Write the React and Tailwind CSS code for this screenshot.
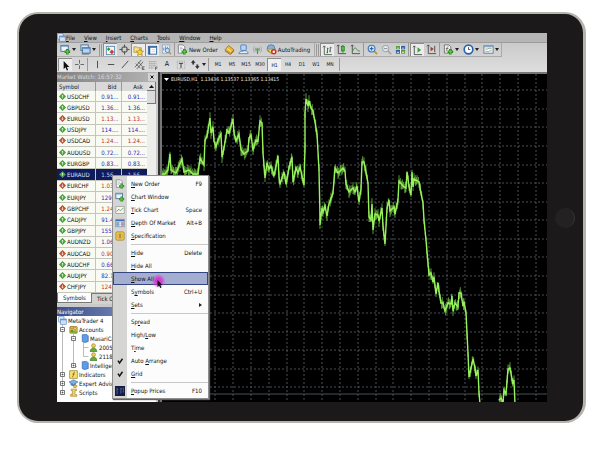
import React, { useState } from 'react';
import clsx from 'clsx';

const UP = '#3f9a2f';
const DOWN = '#b8472c';

const quotes = [
    ['USDCHF', '0.91...', true],
    ['GBPUSD', '1.36...', true],
    ['EURUSD', '1.13...', false],
    ['USDJPY', '114....', true],
    ['USDCAD', '1.24...', false],
    ['AUDUSD', '0.72...', true],
    ['EURGBP', '0.83...', true],
    ['EURAUD', '1.56...', true],
    ['EURCHF', '1.03...', false],
    ['EURJPY', '129....', true],
    ['GBPCHF', '1.24...', false],
    ['CADJPY', '91.4...', true],
    ['GBPJPY', '155....', true],
    ['AUDNZD', '1.06...', true],
    ['AUDCAD', '0.90...', false],
    ['AUDCHF', '0.66...', true],
    ['AUDJPY', '82.7...', true],
    ['CHFJPY', '124....', false],
];

// x,y pairs of the price line
const priceMain = [
    [161, 174], [164, 174], [167, 170], [169, 154], [170, 170], [175, 173], [178, 166], [181, 159], [183, 172], [188, 170], [192, 174], [197, 174],
    [199, 158], [203, 165], [204, 140], [206, 136], [209, 118], [210, 133], [212, 127], [213, 141], [215, 147], [217, 140], [220, 134], [221, 157], [223, 148],
    [226, 130], [228, 133], [232, 119], [233, 133], [235, 141], [238, 134], [240, 150], [243, 154], [247, 151], [248, 138], [250, 135], [252, 150], [255, 140],
    [257, 141], [259, 121], [261, 123], [262, 153], [264, 178], [266, 163], [268, 169], [270, 166], [273, 176], [277, 156], [278, 177], [279, 184], [283, 172],
    [285, 184], [288, 168], [291, 157], [292, 182], [295, 168], [297, 173], [299, 167], [303, 185], [304, 147], [304, 113], [305, 99], [307, 106], [308, 101],
    [310, 108], [312, 111], [314, 122], [316, 134], [318, 170], [319, 217], [319, 225], [321, 208], [322, 212], [324, 206], [326, 216], [328, 204], [332, 193],
    [334, 168], [337, 173], [342, 168], [344, 171], [345, 184], [348, 192], [352, 188], [354, 192], [356, 186], [358, 202], [360, 189], [361, 162], [363, 162],
    [365, 172], [367, 183], [368, 217], [370, 220], [371, 204], [372, 230], [374, 214], [377, 215], [378, 221], [381, 208], [382, 226], [384, 244], [386, 208],
    [388, 200], [389, 211], [393, 207], [394, 214], [397, 200], [398, 181], [402, 186], [405, 188], [406, 172], [408, 186], [410, 195], [411, 172], [412, 187],
    [413, 179], [418, 182], [420, 193], [422, 203], [423, 220], [425, 240], [427, 263], [428, 275], [430, 273], [432, 282], [433, 277], [435, 294], [437, 283],
    [438, 291], [440, 303], [442, 303], [444, 311], [447, 303], [450, 304], [451, 296], [452, 311], [454, 303], [457, 307], [458, 293], [460, 293], [462, 306],
    [463, 302], [465, 313], [466, 333], [467, 353], [468, 377], [472, 359], [474, 368], [475, 376], [477, 370], [478, 393], [479, 404],
];
const priceTail = [[498, 400], [500, 398], [502, 403], [503, 390], [505, 394], [507, 369], [509, 368], [511, 379], [512, 384], [513, 380], [514, 404]];

// turns the line into a row of high/low bars
const toBars = (points) => {
    let d = '';
    let n = 0;
    for (let i = 1; i < points.length; i++) {
        const [x0, y0] = points[i - 1];
        const [x1, y1] = points[i];
        const steps = Math.max(1, Math.round((x1 - x0) * 1.5));
        for (let s = 0; s < steps; s++) {
            const x = x0 + ((x1 - x0) * s) / steps;
            const y = y0 + ((y1 - y0) * s) / steps;
            const up = 1 + ((n * 7) % 5) * 1.2;
            const down = 1 + ((n * 11) % 6);
            d += `M${x.toFixed(1)} ${(y - up).toFixed(1)}V${(y + down).toFixed(1)}`;
            n++;
        }
    }
    return d;
};
const toLine = (points) => 'M' + points.map((p) => p.join(' ')).join('L');

const Svg = ({ children, className = 'size-3' }) => (
    <svg className={clsx('shrink-0', className)} viewBox="0 0 12 12" fill="none" aria-hidden="true">{children}</svg>
);

const Plus = () => <path d="M8 5.500v6M5 8.500h6" stroke="#278a1d" strokeWidth="2.800" />;
const PlusLight = () => <path d="M8 6.500v4M6 8.500h4" stroke="#67c943" strokeWidth="1.200" />;

const icons = {
    newChart: <><rect x="1" y="1.500" width="8" height="6.500" fill="#eef4fa" stroke="#44709d" /><path d="M1 2.500h8" stroke="#6f9ccc" /><Plus /><PlusLight /></>,
    indicators: <><path d="M1.500 1h5l2 2v7h-7z" fill="#f4f4f0" stroke="#666" strokeWidth=".9" /><path d="M6 3C4.500 2.500 4.500 4 4.300 5.500S4 8 3 8M3 5h3" stroke="#555" strokeWidth=".8" /><Plus /><PlusLight /></>,
    profiles: <><rect x="1" y="1" width="8" height="6" fill="#dceafa" stroke="#44709d" /><rect x="2.500" y="4" width="8.500" height="6" fill="#b9d3f0" stroke="#44709d" /><path d="M3 5h8" stroke="#5d8fc6" /><path d="M2 11h8" stroke="#555" strokeWidth=".8" /></>,
    market: <><rect x="1.500" y="1.500" width="9" height="9" fill="#f3f7fc" stroke="#6389b3" /><path d="M4 2.500 6 4.500 4 6.500 2 4.500z" fill="#2d9c33" /><path d="M7.500 5 10 7.500 7.500 10 5 7.500z" fill="#d33b25" /></>,
    target: <><circle cx="6" cy="6" r="3" stroke="#555" strokeWidth="1.100" /><path d="M6 .5v3.500M6 8v3.500M.5 6H4M8 6h3.500" stroke="#555" strokeWidth="1.200" /></>,
    star: <><path d="M1 2h3l1 1h4v5H1z" fill="#f5df88" stroke="#a58a2c" strokeWidth=".8" /><path d="m7.500 4 1.200 2.500 2.800.3-2 1.900.6 2.800-2.600-1.400L5 11.500l.6-2.800-2-1.900 2.800-.3z" fill="#f8d640" stroke="#a67c10" strokeWidth=".7" /></>,
    panel: <><rect x="1.500" y="1.500" width="9" height="8.500" fill="#fff" stroke="#31619c" /><path d="M1.500 2.300h9M2.800 2v8" stroke="#31619c" strokeWidth="1.500" /><path d="M5 5h4M5 7h4" stroke="#b7c7da" strokeWidth=".7" /></>,
    tester: <><rect x="1.500" y="1" width="8" height="9" fill="#e4edf7" stroke="#8ba3bd" strokeWidth=".8" /><path d="M3 7V4M5 6V2.500M7 5V3" stroke="#6586ac" /><circle cx="7" cy="7" r="2.300" fill="#cae2f5" stroke="#4c7dad" /><path d="m8.500 8.700 2.500 2.500" stroke="#b99636" strokeWidth="1.300" /></>,
    order: <><path d="M1.500 1h5l2 2v7h-7z" fill="#fff" stroke="#777" strokeWidth=".9" /><path d="M3 3.500h3M3 5h4M3 6.500h2" stroke="#8b9db2" strokeWidth=".7" /><Plus /><PlusLight /></>,
    book: <><path d="M1 6.500 5 1.500 11 6.500 7 10.500z" fill="#e9b93c" stroke="#94691b" strokeWidth=".8" /><path d="m1 7.500 6 4 4-4" stroke="#94691b" strokeWidth=".9" /><path d="m3.500 5 4 3" stroke="#fff1b0" /></>,
    person: <><rect x="3" y="1" width="6" height="6" rx="1" fill="#b5d5f5" stroke="#4b7dbd" /><path d="M1 10.500c0-2 2-3 4-2.500 2-1.500 6-.5 6 2.500z" fill="#dfecfa" stroke="#4b7dbd" strokeWidth=".9" /></>,
    signal: <><path d="M3 2.500a5 5 0 0 0 0 7M9 2.500a5 5 0 0 1 0 7" stroke="#9aa6ad" /><path d="M4.500 4a3 3 0 0 0 0 4M7.500 4a3 3 0 0 1 0 4" stroke="#719b75" /><circle cx="6" cy="6" r="1.300" fill="#43a13c" /><path d="M6 7v4" stroke="#43a13c" strokeWidth="1.300" /></>,
    auto: <><circle cx="5.500" cy="5" r="4.200" fill="#86b3de" stroke="#44709d" strokeWidth=".8" /><path d="M1 5.500h9L6 11z" fill="#efc94e" stroke="#a37c1e" strokeWidth=".6" /><circle cx="8.500" cy="8.500" r="3" fill="#d22f1c" /><rect x="7.300" y="7.300" width="2.400" height="2.400" fill="#fff" /></>,
    bars: <path d="M2.500 1v9.500H11M1 2.500 2.500 1 4 2.500M6 3v6M4.800 8H6M6 4h1.200M9 2v6M7.800 6.500H9M9 3h1.500" stroke="#3f5141" strokeWidth=".9" />,
    candles: <><path d="M2.500 1v9.500H11M1 2.500 2.500 1 4 2.500" stroke="#4b4b4b" /><path d="M7.500 1v8.500" stroke="#1d7d1d" /><rect x="6" y="2.500" width="3" height="5" fill="#52c243" stroke="#1d7d1d" strokeWidth=".8" /></>,
    line: <><path d="M2.500 1v9.500H11M1 2.500 2.500 1 4 2.500" stroke="#4b4b4b" /><path d="M3 7.500c2-4 3-4 4.500-1.500S10 7 11 8" stroke="#41874b" /></>,
    zoomIn: <><path d="m7 7 4 4" stroke="#b99636" strokeWidth="2" /><circle cx="5" cy="5" r="3.700" fill="#d7ebfb" stroke="#3f78b8" strokeWidth="1.200" /><path d="M3 5h4M5 3v4" stroke="#2b63a4" strokeWidth="1.200" /></>,
    zoomOut: <><path d="m7 7 4 4" stroke="#a9a79f" strokeWidth="1.800" /><circle cx="5" cy="5" r="3.500" fill="#e4e8ea" stroke="#8f9ba5" /><path d="M3 5h4" stroke="#7f8b97" /></>,
    tile: <><rect x="1" y="1.500" width="10" height="9" fill="#fff" /><path d="M1 2h4.500v4H1zM6.500 6.500H11v4H6.500z" fill="#5d9b3c" /><path d="M6.500 2H11v4H6.500zM1 6.500h4.500v4H1z" fill="#2f5fa5" /><path d="M2 4h2.500v1H2zM7.500 4H10v1H7.500zM2 8.500h2.500v1H2zM7.500 8.500H10v1H7.500z" fill="#eef4ee" /></>,
    scroll: <><path d="M2.500 1v9.500H11M1 2.500 2.500 1 4 2.500" stroke="#4b4b4b" /><path d="M6 2.500v6l4-3z" fill="#3fa038" /></>,
    shift: <><path d="M2.500 1v9.500H11M1 2.500 2.500 1 4 2.500M9.500 2v7" stroke="#4b4b4b" /><path d="M5 3v5l3.500-2.500z" fill="#a33b32" /></>,
    clock: <><circle cx="6" cy="6" r="4.700" fill="#fff" stroke="#2d63ae" strokeWidth="1.800" /><path d="M6 3.500V6h2" stroke="#333" strokeWidth=".9" /></>,
    template: <><rect x="1" y="2" width="10" height="8" fill="#fff" stroke="#55789f" /><path d="M1 3h10" stroke="#7ea1c9" strokeWidth="1.300" /><path d="M2.500 5.500h3l1-1 3 1M2.500 8h2l1 .8L7 7.500h2.500" stroke="#6d8f75" strokeWidth=".8" /></>,
    pointer: <path d="M4 1v9l2-2 1.500 3.500 1.400-.6L7.500 7.500h2.700z" fill="#111" />,
    cross: <path d="M6 1v4M6 7v4M1 6h4M7 6h4" stroke="#555" strokeWidth=".9" />,
    vline: <path d="M6 2v8" stroke="#444" />,
    hline: <path d="M2 6h7" stroke="#444" />,
    trend: <path d="m2 10 7-8" stroke="#444" />,
    channel: <><path d="m1 9 7-8M3 11l7-8M2 5l5 5M4.500 3l4 4.500" stroke="#444" strokeWidth=".8" /><path d="M9 8.500h2.500M9 10h2M9 11.500h2.500M9 8.500v3" stroke="#333" strokeWidth=".7" /></>,
    fibo: <><path d="M1 2h9M1 4.500h9M1 7h9M1 9.500h6" stroke="#777" strokeWidth=".8" strokeDasharray="1.500 .6" /><path d="M9 12V8.500h2.500M9 10h2" stroke="#333" strokeWidth=".7" /></>,
    label: <><rect x="1.500" y="1.500" width="9" height="9" stroke="#888" strokeWidth=".7" strokeDasharray="1 1" /><path d="M3.500 4h5M6 4v5.500" stroke="#333" strokeWidth="1.100" /></>,
    arrows: <><path d="M3.500 1 6 4H4.500v2h-2V4H1z" fill="#333" /><path d="M8 11 5.500 8H7V6h2v2h1.500z" fill="#333" /></>,
    tick: <><rect x="1" y="2" width="10" height="8" fill="#f3f7f0" stroke="#8a9a8a" strokeWidth=".8" /><path d="m2 8 2.500-3 2 2L10 3.500" stroke="#48784c" strokeWidth=".8" /></>,
    depth: <><rect x="1" y="1.500" width="10" height="9" fill="#fff" stroke="#5b7ba5" strokeWidth=".8" /><path d="M1 3h10" stroke="#3d6eb3" strokeWidth="2" /><path d="M1.500 4.500h3v5.500h-3z" fill="#8db1df" /><path d="M8 4.500h2.500v5.500H8z" fill="#e19286" /><path d="M1 6h10M1 8h10M4.700 4v6M7.800 4v6" stroke="#7290a8" strokeWidth=".6" /></>,
    spec: <><rect x="1" y="1" width="10" height="10" rx="1.500" fill="#f0c64c" stroke="#9c7a21" strokeWidth=".8" /><circle cx="6" cy="6" r="2.700" fill="#f9e18a" stroke="#a98020" strokeWidth=".7" /><path d="M6 4v4M5 5h2M5 7h2" stroke="#6d5208" strokeWidth=".8" /></>,
    check: <path d="m3.500 5.500 2 2.800 3.500-5" stroke="#111" strokeWidth="1.700" />,
    popup: <><rect x="0" y="0" width="12" height="12" fill="#141c44" /><path d="M2.500 2v8M2.500 4H4M6.500 3h2M7 3v6M10 2v6" stroke="#5a76b4" strokeWidth=".9" /></>,
    terminal: <><rect x="1" y="1" width="7" height="7" fill="#e8f1fb" stroke="#4c7dbd" strokeWidth=".8" /><rect x="3.500" y="4" width="7.500" height="7" fill="#cfe1f6" stroke="#4c7dbd" strokeWidth=".8" /><path d="M3.500 5h7.500" stroke="#4c7dbd" strokeWidth="1.200" /></>,
    accounts: <><rect x="1" y="2" width="10" height="9" rx="1" fill="#e7c34b" stroke="#8e6f1c" strokeWidth=".8" /><circle cx="4" cy="3.500" r="2" fill="#e7b65c" stroke="#7a561c" strokeWidth=".5" /><path d="M1.500 10c0-5 5-5 5 0z" fill="#4e9e3b" /><circle cx="8" cy="4.500" r="1.800" fill="#f2cf88" stroke="#7a561c" strokeWidth=".5" /><path d="M5.500 11c0-5 5.500-5 5.500 0z" fill="#79b23a" /></>,
    server: <path d="m3 1 6-.5 2 2V10l-5 1.500L3 10z" fill="#5f9de4" stroke="#255da6" strokeWidth=".8" />,
    user: <><circle cx="6" cy="3.500" r="2.600" fill="#f0cc52" stroke="#8e6f1c" strokeWidth=".7" /><path d="M1.500 11.500c0-6.500 9-6.500 9 0z" fill="#62ac36" stroke="#2e6f1c" strokeWidth=".7" /></>,
    func: <><rect x="1" y="1" width="10" height="10" fill="#f8e16c" stroke="#97791d" strokeWidth=".9" /><path d="M8 3C6.500 2.500 6.300 4 6 6s-.7 3.500-2 3M4.500 5.500h3" stroke="#5a4a10" strokeWidth=".9" /></>,
    expert: <><path d="M0 4 6 1l6 3-6 3.500z" fill="#7fb1e6" stroke="#31619c" strokeWidth=".7" /><path d="M2 5v3c2 2 5 2 7 0V5L6 7z" fill="#4e86c7" /><path d="M7 7.500 11 9l-2 3-3-1z" fill="#eec44c" stroke="#94691b" strokeWidth=".6" /></>,
    script: <><path d="M3 1.500h7v2H8V9h2.500v2H3V9h1.500V3.500H3z" fill="#f1d774" stroke="#97791d" strokeWidth=".8" /><path d="m1 9 3-2 1 3-3 1.500z" fill="#dca93a" /></>,
};

const Caret = () => (
    <svg className="mx-px h-[3px] w-[4px]" viewBox="0 0 4 3" aria-hidden="true"><path d="M0 0h4L2 3z" fill="#222" /></svg>
);

const ToolButton = ({ name, label, pressed, caret, text }) => (
    <button
        type="button"
        aria-label={label}
        aria-pressed={pressed ? true : undefined}
        className={clsx('flex h-[13px] items-center justify-center', text ? 'px-px' : caret ? 'w-5' : 'w-[14px]', pressed && 'border-l border-t border-[#8c8c8c] bg-[#ececec]')}
    >
        <Svg className={name === 'label' || name === 'fibo' ? 'size-[10px]' : 'size-[11px]'}>{icons[name]}</Svg>
        {text && <span className="ml-px leading-[9px]">{text}</span>}
        {caret && <Caret />}
    </button>
);

const Separator = () => <span className="mx-px h-[13px] w-px shrink-0 bg-[#999]" />;
const Grip = () => <span className="mx-px h-[12px] w-[3px] shrink-0 border-x border-[#999]" />;

// label with its access key underlined
const Hot = ({ text, at = 0 }) => (
    at === 0
        ? <span className="inline-block first-letter:underline">{text}</span>
        : <>{text.slice(0, at)}<span className="underline">{text[at]}</span>{text.slice(at + 1)}</>
);

const MenuBar = () => (
    <nav className="flex h-[9px] items-center gap-[9px] bg-[#b5b5b5] leading-[9px] text-[#111]">
        <Svg className="-mr-[9px] size-[9px]">{icons.terminal}</Svg>
        {['File', 'View', 'Insert', 'Charts', 'Tools', 'Window', 'Help'].map((item) => (
            <button key={item} type="button" className="leading-[9px]"><Hot text={item} /></button>
        ))}
    </nav>
);

const Toolbars = () => {
    const [frame, setFrame] = useState('H1');
    return (
        <div className="bg-linear-to-b from-[#cacaca] to-[#dedede] text-[#111]">
            <div className="flex h-[15px] items-center border-t border-[#9d9d9d]">
                <div className="flex items-center border-b border-r border-[#aaa] pl-px">
                    <ToolButton name="newChart" label="New chart" caret />
                    <ToolButton name="profiles" label="Profiles" caret />
                    <Grip />
                    <ToolButton name="market" label="Market Watch" pressed />
                    <ToolButton name="target" label="Data Window" />
                    <ToolButton name="star" label="Navigator" pressed />
                    <ToolButton name="panel" label="Terminal" pressed />
                    <ToolButton name="tester" label="Strategy Tester" />
                    <Separator />
                    <ToolButton name="order" text="New Order" />
                    <span className="w-1" />
                    <ToolButton name="book" label="MetaEditor" />
                    <ToolButton name="person" label="Community" />
                    <ToolButton name="signal" label="Signals" />
                    <ToolButton name="auto" text="AutoTrading" />
                    <span className="w-[3px]" />
                </div>
                <div className="flex items-center border-b border-r border-[#aaa]">
                    <Grip />
                    <ToolButton name="bars" label="Bar chart" pressed />
                    <ToolButton name="candles" label="Candlesticks" />
                    <ToolButton name="line" label="Line chart" />
                    <Separator />
                    <ToolButton name="zoomIn" label="Zoom in" />
                    <ToolButton name="zoomOut" label="Zoom out" />
                    <ToolButton name="tile" label="Tile windows" />
                    <Separator />
                    <ToolButton name="scroll" label="Auto scroll" pressed />
                    <ToolButton name="shift" label="Chart shift" />
                    <Separator />
                    <ToolButton name="indicators" label="Indicators" caret />
                    <ToolButton name="clock" label="Periods" caret />
                    <ToolButton name="template" label="Templates" caret />
                </div>
            </div>
            <div className="flex h-[15px] items-center">
                <div className="flex items-center border-r border-[#999] pl-px">
                    <ToolButton name="pointer" label="Cursor" pressed />
                    <ToolButton name="cross" label="Crosshair" />
                    <Separator />
                    <span className="w-px" />
                    <ToolButton name="vline" label="Vertical line" />
                    <ToolButton name="hline" label="Horizontal line" />
                    <ToolButton name="trend" label="Trendline" />
                    <ToolButton name="channel" label="Equidistant channel" />
                    <ToolButton name="fibo" label="Fibonacci" />
                    <button type="button" className="h-[13px] w-[14px] text-[7px] leading-[13px]">A</button>
                    <ToolButton name="label" label="Text label" />
                    <ToolButton name="arrows" label="Arrows" caret />
                </div>
                <div className="flex items-center border-r border-[#999] px-[2px]">
                    {['M1', 'M5', 'M15', 'M30', 'H1', 'H4', 'D1', 'W1', 'MN'].map((item) => (
                        <button
                            key={item}
                            type="button"
                            aria-pressed={item === frame}
                            onClick={() => setFrame(item)}
                            className={clsx('h-[13px] w-[14px] text-[5px] leading-[13px]', item === frame && 'border-l border-t border-[#8c8c8c] bg-[#efefef]')}
                        >
                            {item}
                        </button>
                    ))}
                </div>
            </div>
        </div>
    );
};

const Direction = ({ up }) => (
    <svg className="size-[7px] shrink-0" viewBox="0 0 8 8" aria-hidden="true">
        <path d="M4 0 8 4 4 8 0 4z" fill={up ? UP : DOWN} />
        <path d={up ? 'M4 2v4M2.500 4 4 2.500 5.500 4' : 'M4 2v4M2.500 4 4 5.500 5.500 4'} stroke="#fff" strokeWidth=".7" fill="none" />
    </svg>
);

const MarketWatch = () => (
    <section>
        <div className="flex h-[10px] items-center justify-between bg-linear-to-r from-[#828282] to-[#b4b4b4] leading-[10px] text-[#dcdcdc]">
            <h2>Market Watch: 16:57:32</h2>
            <button type="button" aria-label="Close" className="size-2 bg-[#d4d4d4]">
                <svg className="size-2" viewBox="0 0 8 8" aria-hidden="true"><path d="m2.500 2.500 3 3m0-3-3 3" stroke="#111" /></svg>
            </button>
        </div>
        <div className="flex">
            <table className="h-[211px] flex-1 table-fixed border-collapse bg-white leading-[9px]">
                <thead className="bg-[#d9d9d9] text-[#111]">
                    <tr className="h-[9px]">
                        <th className="w-[38px] border-r border-[#999] p-0 pl-[2px] text-left font-normal">Symbol</th>
                        <th className="w-[26px] border-r border-[#999] p-0 pr-1 text-right font-normal">Bid</th>
                        <th className="p-0 pr-1 text-right font-normal">Ask</th>
                    </tr>
                </thead>
                <tbody>
                    {quotes.map(([symbol, price, up]) => {
                        const selected = symbol === 'EURAUD';
                        const tone = selected ? 'text-[#cdd2ea]' : up ? 'text-[#1f27b8]' : 'text-[#c22a20]';
                        return (
                            <tr key={symbol} className={clsx('border-b border-[#c4c6bd]', selected ? 'bg-[#101b5c] text-[#dfe2f3]' : 'bg-[#f9fbf3] text-[#111]')}>
                                <td className="border-r border-[#c4c6bd] p-0 pl-[2px]">
                                    <span className="flex items-center gap-px"><Direction up={up} />{symbol}</span>
                                </td>
                                <td className={clsx('border-r border-[#c4c6bd] p-0 pr-[2px] text-right', tone)}>{price}</td>
                                <td className={clsx('p-0 pr-[2px] text-right', tone)}>{price}</td>
                            </tr>
                        );
                    })}
                </tbody>
            </table>
            <div className="w-[9px] bg-[#ededeb]">
                <button type="button" aria-label="Scroll up" className="flex h-[9px] w-full items-center justify-center border-b border-r border-[#777] bg-[#dcdcdc]">
                    <svg className="h-[3px] w-[5px]" viewBox="0 0 5 3" aria-hidden="true"><path d="M2.500 0 5 3H0z" fill="#111" /></svg>
                </button>
                <div className="h-[13px] border-b border-r border-[#777] bg-[#dcdcdc]" />
            </div>
        </div>
        <div role="tablist" className="flex h-[11px] bg-[#d2d2d2] leading-[9px] whitespace-nowrap text-[#111]">
            <button type="button" role="tab" aria-selected="true" className="h-[10px] border-x border-b border-[#777] bg-white px-[5px]">Symbols</button>
            <button type="button" role="tab" aria-selected="false" className="h-[10px] border-r border-t border-[#777] px-[5px]">Tick Chart</button>
        </div>
    </section>
);

const Expander = ({ open }) => (
    <svg className="mr-1 size-[5px] shrink-0" viewBox="0 0 5 5" aria-hidden="true">
        <path d={open ? 'M.5.5h4v4h-4zM1.500 2.500h2' : 'M.5.5h4v4h-4zM1.500 2.500h2M2.500 1.500v2'} fill="#fff" stroke="#555" strokeWidth=".8" />
    </svg>
);

const tree = [
    ['terminal', 'MetaTrader 4', 'pl-px', null],
    ['accounts', 'Accounts', 'pl-[3px]', true],
    ['server', 'MasariCapital', 'pl-[14px]', true],
    ['user', '2005', 'pl-[32px]', null],
    ['user', '2118', 'pl-[32px]', null],
    ['server', 'Intelligent', 'pl-[14px]', false],
    ['func', 'Indicators', 'pl-[3px]', false],
    ['expert', 'Expert Advisors', 'pl-[3px]', false],
    ['script', 'Scripts', 'pl-[3px]', false],
];

const Navigator = () => (
    <section className="mt-[3px] flex-1 bg-white">
        <h2 className="h-[9px] bg-linear-to-r from-[#3b4f8a] to-[#8c9cc8] leading-[9px] text-white">Navigator</h2>
        <ul className="relative overflow-hidden pb-[5px] whitespace-nowrap text-[#111]">
            <svg className="absolute left-0 top-0 h-[81px] w-10" viewBox="0 0 40 81" fill="none" aria-hidden="true">
                <path d="M5.500 9v68M16.500 18v32M26.500 27v13.500M16 50.500h4M26.500 31.500h5M26.500 40.500h5" stroke="#aaa" strokeWidth=".8" />
            </svg>
            {tree.map(([icon, text, indent, open]) => (
                <li key={text} className={clsx('relative flex h-[9px] items-center leading-[9px]', indent)}>
                    {open !== null && <Expander open={open} />}
                    <Svg className="mr-px size-[9px]">{icons[icon]}</Svg>
                    {text}
                </li>
            ))}
        </ul>
    </section>
);

const menuGroups = [
    [
        { text: 'New Order', icon: 'order', keys: 'F9' },
        { text: 'Chart Window', icon: 'newChart' },
        { text: 'Tick Chart', icon: 'tick', keys: 'Space' },
        { text: 'Depth Of Market', icon: 'depth', keys: 'Alt+B' },
        { text: 'Specification', icon: 'spec' },
    ],
    [
        { text: 'Hide', keys: 'Delete' },
        { text: 'Hide All' },
        { text: 'Show All', active: true },
        { text: 'Symbols', at: 1, keys: 'Ctrl+U' },
        { text: 'Sets', sub: true },
    ],
    [
        { text: 'Spread', at: 2 },
        { text: 'High/Low', at: 5 },
        { text: 'Time', at: 1 },
        { text: 'Auto Arrange', at: 5, icon: 'check' },
        { text: 'Grid', icon: 'check' },
    ],
    [{ text: 'Popup Prices', icon: 'popup', keys: 'F10' }],
];

const ContextMenu = () => (
    <div role="menu" className="absolute left-[55px] top-[103px] z-10 w-[97px] border border-[#8f8f8f] bg-linear-to-r from-[#d5d5d3] from-[14px] to-[#fcfcfc] to-[14px] py-px text-[#111] shadow-[1px_1px_1px_#666]">
        {menuGroups.map((group, i) => (
            <div key={i} role="group">
                {i > 0 && <div role="separator" className="flex h-1 items-center pl-[18px]"><span className="h-px flex-1 bg-[#c9c9c9]" /></div>}
                {group.map((item) => (
                    <button
                        key={item.text}
                        type="button"
                        role={item.icon === 'check' ? 'menuitemcheckbox' : 'menuitem'}
                        aria-checked={item.icon === 'check' ? true : undefined}
                        className={clsx('flex h-[13px] w-full items-center pr-[6px] leading-[11px]', item.active && 'bg-[#a3aed0] outline outline-[#35457f] -outline-offset-1')}
                    >
                        <span className="flex w-[18px] shrink-0 pl-[2px]">
                            {item.icon && <Svg className="size-[10px]">{icons[item.icon]}</Svg>}
                        </span>
                        <span><Hot text={item.text} at={item.at} /></span>
                        {item.keys && <span className="ml-auto">{item.keys}</span>}
                        {item.sub && <svg className="ml-auto h-1 w-[3px]" viewBox="0 0 3 4" aria-hidden="true"><path d="M0 0v4l3-2z" fill="#222" /></svg>}
                    </button>
                ))}
            </div>
        ))}
        <svg className="pointer-events-none absolute left-[38px] top-[98px] size-4" viewBox="0 0 16 16" aria-hidden="true">
            <defs>
                <radialGradient id="glow">
                    <stop offset=".4" stopColor="#d23ad0" />
                    <stop offset="1" stopColor="#d23ad0" stopOpacity="0" />
                </radialGradient>
            </defs>
            <circle cx="7.500" cy="7" r="7" fill="url(#glow)" />
            <path d="M6.500 6v7l1.700-1.500 1 2.500 1.300-.6-1.100-2.300h2.100z" fill="#111" />
        </svg>
    </div>
);

const gridX = Array.from({ length: 22 }, (_, i) => Math.round(161 + i * 17.8));
const gridY = Array.from({ length: 17 }, (_, i) => Math.round(90.3 + i * 18.57));

const Chart = () => (
    <section className="relative min-w-0 flex-1 border-l-2 border-t-2 border-[#777] bg-black">
        <svg className="block h-full w-full" viewBox="161 74 386 328" preserveAspectRatio="xMinYMin slice" fill="none" role="img" aria-label="EURUSD H1 price chart">
            <g stroke="#4a5056" strokeWidth="1" strokeDasharray="2 2">
                {gridX.slice(1).map((x) => <path key={x} d={`M${x} 74v328`} />)}
                {gridY.map((y) => <path key={y} d={`M161 ${y}h386`} />)}
            </g>
            <path d="M161 394h386" stroke="#4b5157" />
            <path d={toBars(priceMain) + toBars(priceTail)} stroke="#6fbd43" strokeWidth=".8" />
            <path d={toLine(priceMain) + toLine(priceTail)} stroke="#98f25c" strokeWidth="1.400" />
        </svg>
        <h2 className="absolute left-[2px] top-[2px] flex items-center gap-[2px] bg-black pr-px text-[5px] leading-[6px] whitespace-pre text-[#e8e8e8]">
            <svg className="h-[3px] w-[5px]" viewBox="0 0 5 3" aria-hidden="true"><path d="M0 0h5L2.500 3z" fill="#fff" /></svg>
            {'EURUSD,H1  1.13436 1.13537 1.13365 1.13415'}
        </h2>
    </section>
);

const App = () => (
    <div className="min-h-screen bg-white pt-3 pr-[14px] pb-9 pl-[17px] font-['DejaVu_Sans_Condensed','DejaVu_Sans',sans-serif] text-[6px]">
        <div className="flex items-center rounded-[21px] border-2 border-r-[3px] border-[#b4b3ae] bg-[#1b191a] py-[19px] pl-[38px]">
            <main className="min-w-0 flex-1 overflow-hidden">
                <MenuBar />
                <Toolbars />
                <div className="relative flex bg-[#c9c9c9]">
                    <div className="flex w-[99px] shrink-0 flex-col">
                        <MarketWatch />
                        <Navigator />
                    </div>
                    <div className="w-1 shrink-0 border-r-2 border-[#333]" />
                    <Chart />
                    <ContextMenu />
                </div>
            </main>
            <div className="flex w-9 shrink-0 justify-center">
                <button type="button" aria-label="Home" className="size-5 rounded-full border-r border-[#3a3839] bg-[#232122]" />
            </div>
        </div>
    </div>
);

export default App;
